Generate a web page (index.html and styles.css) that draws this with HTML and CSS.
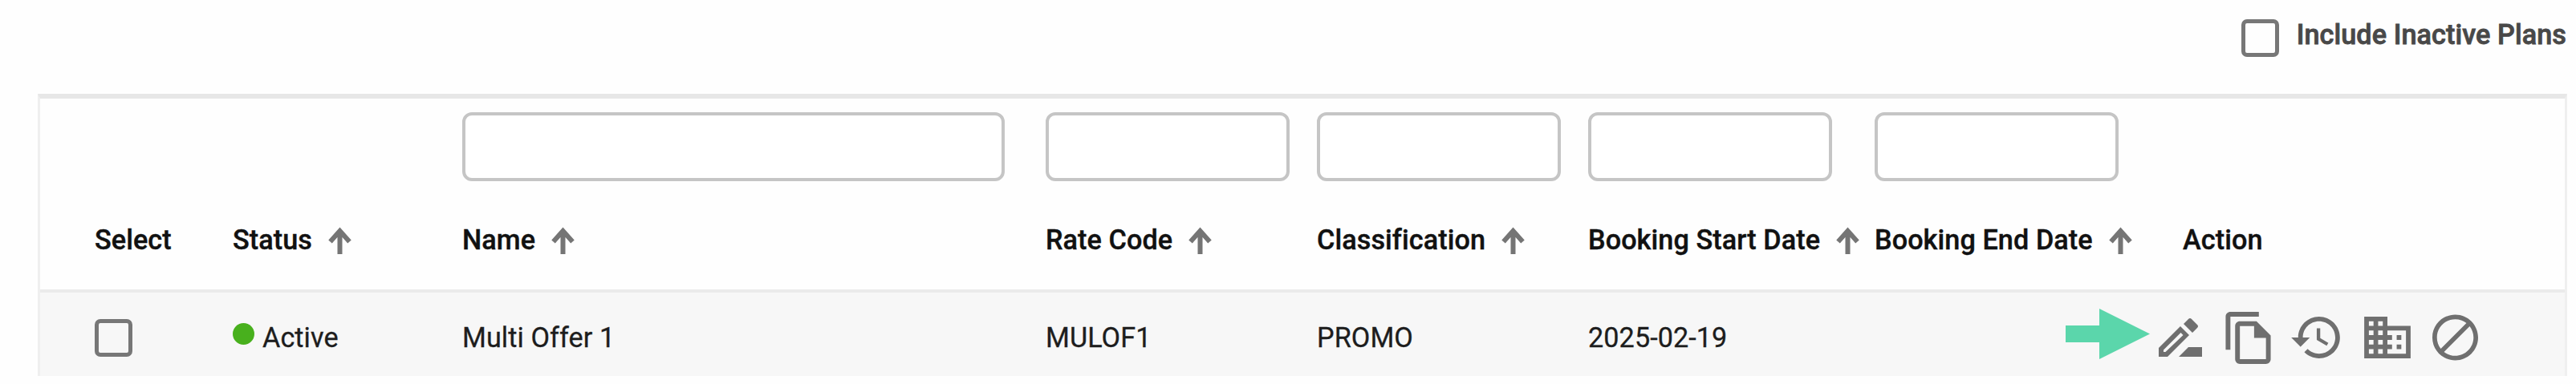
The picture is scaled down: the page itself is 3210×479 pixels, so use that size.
FILE: index.html
```html
<!DOCTYPE html>
<html lang="en">
<head>
    <meta charset="UTF-8">
    <title>Rate Plans</title>
    <link rel="stylesheet" href="styles.css">
</head>
<body>
<svg class="defs">
    <symbol id="arrow-up" viewBox="0 0 29 34">
        <path d="M14.5 34V5M2.500 18.500L14.500 5l12 13.500" fill="none" stroke="currentColor" stroke-width="6"/>
    </symbol>
</svg>

<div class="toolbar">
    <label class="inactive-toggle">
        <span class="checkbox"></span>
        <span class="toggle-text">Include Inactive Plans</span>
    </label>
</div>

<div class="table">
    <div class="row filters">
        <div></div>
        <div></div>
        <div><input type="text" class="filter wide"></div>
        <div><input type="text" class="filter"></div>
        <div><input type="text" class="filter"></div>
        <div><input type="text" class="filter"></div>
        <div><input type="text" class="filter"></div>
        <div></div>
    </div>
    <div class="row headings">
        <div class="heading"><span>Select</span></div>
        <div class="heading"><span>Status</span><svg class="sort"><use href="#arrow-up"/></svg></div>
        <div class="heading"><span>Name</span><svg class="sort"><use href="#arrow-up"/></svg></div>
        <div class="heading"><span>Rate Code</span><svg class="sort"><use href="#arrow-up"/></svg></div>
        <div class="heading"><span>Classification</span><svg class="sort"><use href="#arrow-up"/></svg></div>
        <div class="heading"><span>Booking Start Date</span><svg class="sort"><use href="#arrow-up"/></svg></div>
        <div class="heading"><span>Booking End Date</span><svg class="sort"><use href="#arrow-up"/></svg></div>
        <div class="heading"><span>Action</span></div>
    </div>
    <div class="row plan">
        <div><span class="checkbox"></span></div>
        <div class="status"><span class="dot"></span><span>Active</span></div>
        <div>Multi Offer 1</div>
        <div>MULOF1</div>
        <div>PROMO</div>
        <div>2025-02-19</div>
        <div></div>
        <div class="actions">
            <svg class="pointer" viewBox="0 0 105 63"><path d="M0 21h42V0l63 31.500-63 31.500V42H0z"/></svg>
            <svg class="icon edit" viewBox="0 0 54 48"><path fill-rule="evenodd" d="M0 48V37L27 10l11 11-27 27H0zM6 42h2.500L30.500 21 27.500 18 6 39.500V42zM31 7l6-6q2-2 4 0l7 7q2 2 0 4l-6 6zM25 48l12-12h17v12H25z"/></svg>
            <svg class="icon copy" viewBox="2 1 19 22"><path d="M16 1H4c-1.100 0-2 .9-2 2v14h2V3h12V1zm-1 4H8c-1.100 0-2 .9-2 2v14c0 1.100.9 2 2 2h11c1.100 0 2-.9 2-2V11l-6-6zM8 21V7h6v5h5v9H8z"/></svg>
            <svg class="icon history" viewBox="1 3 21 18"><path d="M13 3c-4.970 0-9 4.030-9 9H1l3.890 3.890.07.14L9 12H6c0-3.870 3.130-7 7-7s7 3.130 7 7-3.130 7-7 7c-1.930 0-3.680-.79-4.940-2.060l-1.420 1.420C8.270 19.990 10.510 21 13 21c4.970 0 9-4.030 9-9s-4.030-9-9-9zm-1 5v5l4.280 2.540.72-1.210-3.500-2.080V8H12z"/></svg>
            <svg class="icon business" viewBox="2 3 20 18"><path d="M12 7V3H2v18h20V7H12zM6 19H4v-2h2v2zm0-4H4v-2h2v2zm0-4H4V9h2v2zm0-4H4V5h2v2zm4 12H8v-2h2v2zm0-4H8v-2h2v2zm0-4H8V9h2v2zm0-4H8V5h2v2zm10 12h-8v-2h2v-2h-2v-2h2v-2h-2V9h8v10zm-2-8h-2v2h2v-2zm0 4h-2v2h2v-2z"/></svg>
            <svg class="icon block" viewBox="2 2 20 20"><path d="M12 2C6.480 2 2 6.480 2 12s4.480 10 10 10 10-4.480 10-10S17.520 2 12 2zM4 12c0-4.420 3.580-8 8-8 1.850 0 3.550.63 4.900 1.690L5.690 16.900C4.630 15.550 4 13.850 4 12zm8 8c-1.850 0-3.550-.63-4.900-1.690L18.310 7.100C19.370 8.450 20 10.150 20 12c0 4.420-3.580 8-8 8z"/></svg>
        </div>
    </div>
</div>
</body>
</html>
```
FILE: styles.css
```css
* {
    box-sizing: border-box;
}
body {
    margin: 0;
    height: 479px;
    overflow: hidden;
    background: #fefefe;
    font-family: Roboto, "Liberation Sans", sans-serif;
    font-size: 34.2px;
    line-height: 40px;
    color: #1d1d1d;
}
.defs {
    display: none;
}
.toolbar {
    display: flex;
    justify-content: flex-end;
    height: 117px;
    padding: 24px 12px 0 0;
}
.inactive-toggle {
    display: flex;
    align-items: flex-start;
    gap: 22px;
    height: 47px;
    font-weight: 500;
    letter-spacing: 0.08px;
    color: #484848;
}
.toggle-text {
    margin-top: -1px;
    -webkit-text-stroke: 0.8px;
}
.checkbox {
    display: block;
    width: 47px;
    height: 47px;
    border: 5px solid #777;
    border-radius: 7px;
}
.table {
    width: 3152px;
    height: 352px;
    margin-left: 47px;
    border: 3px solid #efefef;
    border-top: 6px solid #e7e7e7;
    border-bottom: none;
}
.row {
    display: grid;
    grid-template-columns: 172px 286px 727px 338px 338px 357px 384px 1fr;
    padding-left: 68px;
}
.filters {
    height: 120px;
    padding-top: 17px;
}
.filter {
    display: block;
    width: 304px;
    height: 86px;
    border: 4px solid #c5c5c5;
    border-radius: 12px;
    background: #fff;
}
.filter.wide {
    width: 676px;
}
.headings {
    height: 122px;
    padding-top: 36px;
    border-bottom: 4px solid #ebebeb;
    font-weight: 500;
    letter-spacing: 0.08px;
    color: #111;
    white-space: nowrap;
    -webkit-text-stroke: 0.4px;
}
.heading {
    display: flex;
    gap: 20px;
}
.sort {
    width: 29px;
    height: 34px;
    margin-top: 4px;
    color: #757575;
}
.plan {
    height: 104px;
    align-items: center;
    padding-top: 8px;
    background: #f7f7f7;
    letter-spacing: 0.08px;
    -webkit-text-stroke: 0.3px;
}
.status {
    display: flex;
    gap: 10px;
}
.dot {
    width: 27px;
    height: 27px;
    margin-top: 2px;
    border-radius: 50%;
    background: #48b01d;
}
.actions {
    display: flex;
    align-items: center;
    position: relative;
}
.icon {
    fill: #6f6f6f;
}
.edit {
    width: 54px;
    height: 48px;
    margin-left: -30px;
}
.copy {
    width: 57px;
    height: 65px;
    margin-left: 29px;
}
.history {
    width: 61px;
    height: 52px;
    margin-left: 25px;
}
.business {
    width: 60px;
    height: 52px;
    margin-left: 29px;
}
.block {
    width: 57px;
    height: 58px;
    margin-left: 26px;
}
/* callout arrow over the row, pointing at the edit icon */
.pointer {
    position: absolute;
    left: -146px;
    top: -4px;
    width: 105px;
    height: 63px;
    fill: #5bd6ab;
}
```
